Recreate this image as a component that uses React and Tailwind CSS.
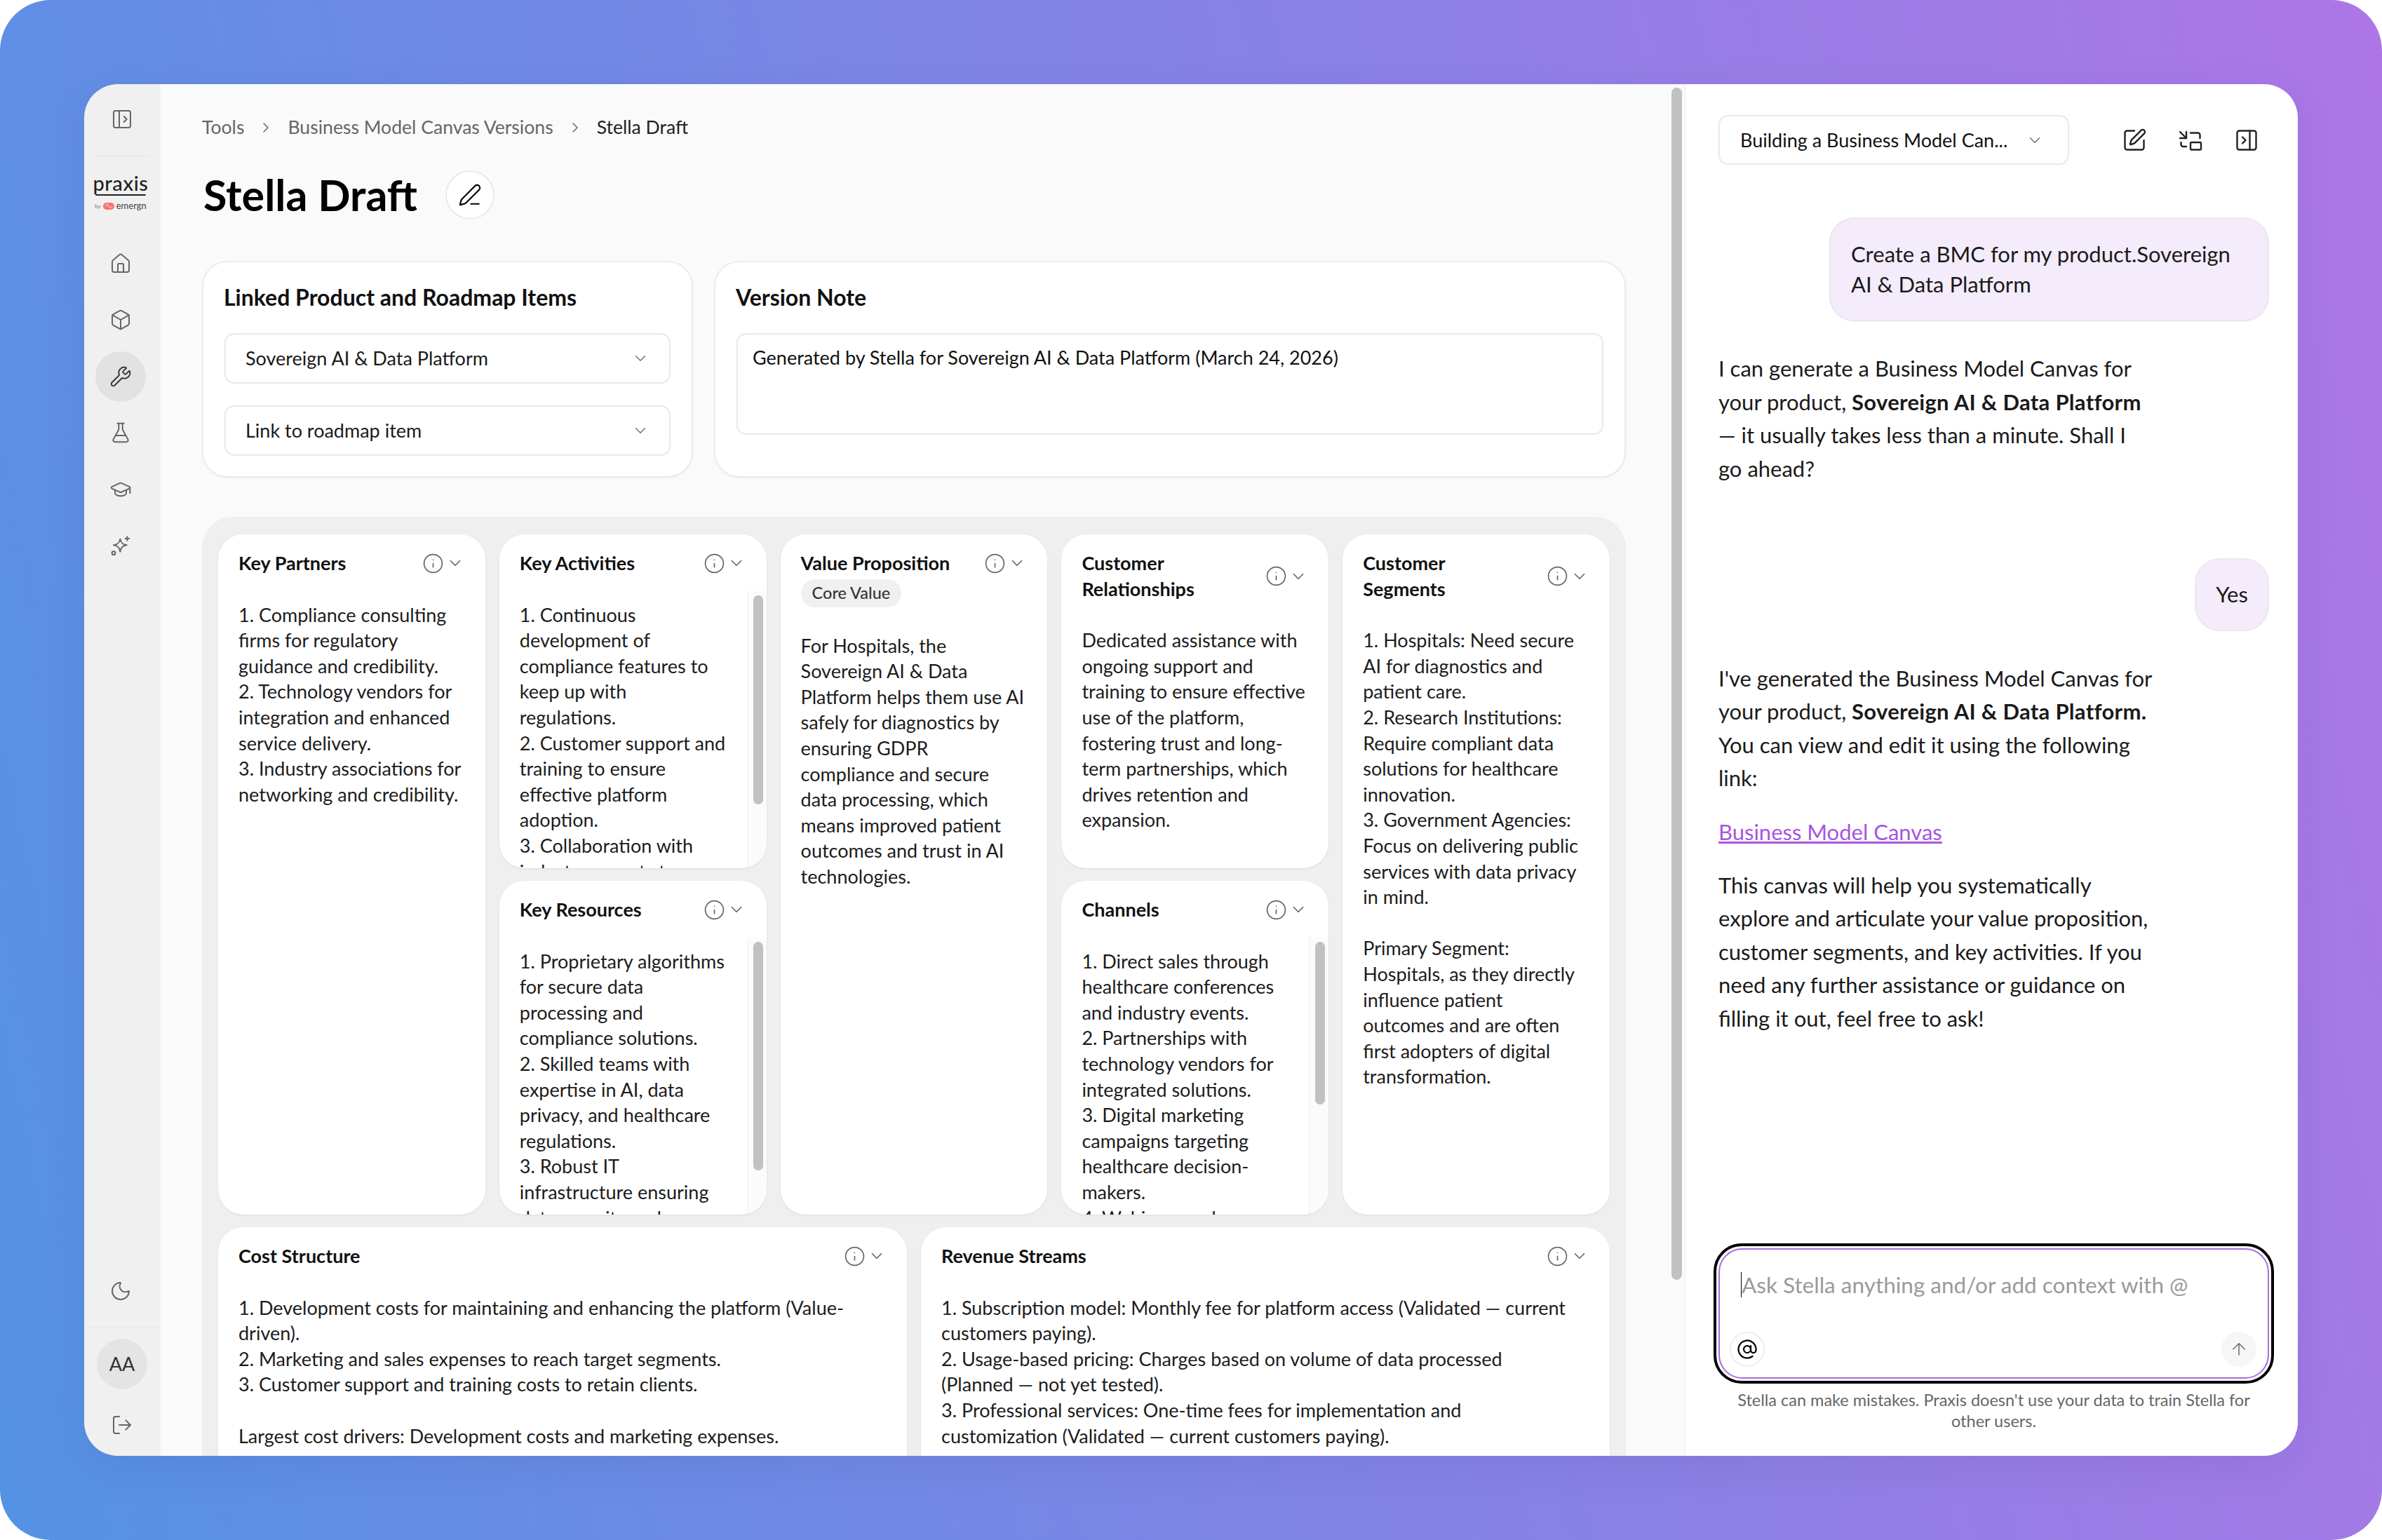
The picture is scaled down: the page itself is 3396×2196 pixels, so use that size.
import {
  ArrowUp,
  AtSign,
  Box,
  ChevronDown,
  ChevronRight,
  FlaskConical,
  GraduationCap,
  House,
  Info,
  LogOut,
  Moon,
  PanelLeftOpen,
  PanelRightClose,
  PenLine,
  PictureInPicture,
  SquarePen,
  Wrench,
} from 'lucide-react';

// Line breaks are kept as they are in the screenshot
const CARDS = {
  partners: [
    '1. Compliance consulting',
    'firms for regulatory',
    'guidance and credibility.',
    '2. Technology vendors for',
    'integration and enhanced',
    'service delivery.',
    '3. Industry associations for',
    'networking and credibility.',
  ],
  activities: [
    '1. Continuous',
    'development of',
    'compliance features to',
    'keep up with',
    'regulations.',
    '2. Customer support and',
    'training to ensure',
    'effective platform',
    'adoption.',
    '3. Collaboration with',
    'industry experts to',
  ],
  resources: [
    '1. Proprietary algorithms',
    'for secure data',
    'processing and',
    'compliance solutions.',
    '2. Skilled teams with',
    'expertise in AI, data',
    'privacy, and healthcare',
    'regulations.',
    '3. Robust IT',
    'infrastructure ensuring',
    'data security and',
  ],
  value: [
    'For Hospitals, the',
    'Sovereign AI & Data',
    'Platform helps them use AI',
    'safely for diagnostics by',
    'ensuring GDPR',
    'compliance and secure',
    'data processing, which',
    'means improved patient',
    'outcomes and trust in AI',
    'technologies.',
  ],
  relationships: [
    'Dedicated assistance with',
    'ongoing support and',
    'training to ensure effective',
    'use of the platform,',
    'fostering trust and long-',
    'term partnerships, which',
    'drives retention and',
    'expansion.',
  ],
  channels: [
    '1. Direct sales through',
    'healthcare conferences',
    'and industry events.',
    '2. Partnerships with',
    'technology vendors for',
    'integrated solutions.',
    '3. Digital marketing',
    'campaigns targeting',
    'healthcare decision-',
    'makers.',
    '4. Webinars and',
  ],
  segments: [
    '1. Hospitals: Need secure',
    'AI for diagnostics and',
    'patient care.',
    '2. Research Institutions:',
    'Require compliant data',
    'solutions for healthcare',
    'innovation.',
    '3. Government Agencies:',
    'Focus on delivering public',
    'services with data privacy',
    'in mind.',
    '',
    'Primary Segment:',
    'Hospitals, as they directly',
    'influence patient',
    'outcomes and are often',
    'first adopters of digital',
    'transformation.',
  ],
  cost: [
    '1. Development costs for maintaining and enhancing the platform (Value-',
    'driven).',
    '2. Marketing and sales expenses to reach target segments.',
    '3. Customer support and training costs to retain clients.',
    '',
    'Largest cost drivers: Development costs and marketing expenses.',
  ],
  revenue: [
    '1. Subscription model: Monthly fee for platform access (Validated — current',
    'customers paying).',
    '2. Usage-based pricing: Charges based on volume of data processed',
    '(Planned — not yet tested).',
    '3. Professional services: One-time fees for implementation and',
    'customization (Validated — current customers paying).',
  ],
};

function Lines({ lines }) {
  return lines.map((line, i) => (
    <div key={i} className="whitespace-nowrap">
      {line || '\u00a0'}
    </div>
  ));
}

function SparkIcon() {
  return (
    <svg width="32" height="32" viewBox="0 0 24 24" fill="none" stroke="currentColor" strokeWidth="1.5" strokeLinecap="round" strokeLinejoin="round">
      <path d="M11.5 5c.7 4 2.5 5.8 7 6.5-4.5.7-6.3 2.5-7 7-.7-4.5-2.5-6.3-7-7 4.5-.7 6.3-2.5 7-6.5z" />
      <path d="M19 2.5v4M17 4.5h4" />
      <circle cx="4.5" cy="20" r="1.8" />
    </svg>
  );
}

function NavItem({ children, active }) {
  return (
    <div className={`w-[72px] h-[72px] rounded-full flex items-center justify-center ${active ? 'bg-[#e2e2e2] text-[#3a3a3a]' : 'text-[#666]'}`}>
      {children}
    </div>
  );
}

function Sidebar() {
  return (
    <aside className="w-[109px] shrink-0 bg-[#f0f0f0] border-r border-[#f4f4f4] flex flex-col items-center pt-[34px] pb-[28px]">
      <PanelLeftOpen size={32} strokeWidth={1.5} className="text-[#666]" />
      <div className="w-[76px] h-px bg-[#e2e2e2] mt-[36px]" />

      {/* Logo */}
      <div className="h-[117px] w-full flex flex-col items-center pt-[24px] pr-[4px]">
        <span className="text-[29px] leading-[28px] font-medium text-[#222] tracking-[0.6px]">praxis</span>
        <div className="w-[72px] h-[2px] bg-[#222] rounded-full mt-[2px]" />
        <div className="flex items-center gap-[3px] mt-[8px]">
          <span className="text-[8px] leading-none text-[#777]">by</span>
          <svg width="16" height="12" viewBox="0 0 16 12" fill="#fb6f6f">
            <rect x="0" y="1" width="16" height="10" rx="5" />
            <path d="M3 6c2-3 4-3 5 0s3 3 5 0" fill="none" stroke="#fff" strokeWidth="1" />
          </svg>
          <span className="text-[13px] leading-none text-[#444]">emergn</span>
        </div>
      </div>

      <div className="flex flex-col items-center gap-[8.4px] pr-[4px]">
        <NavItem><House size={32} strokeWidth={1.5} /></NavItem>
        <NavItem><Box size={32} strokeWidth={1.5} /></NavItem>
        <NavItem active><Wrench size={32} strokeWidth={1.5} /></NavItem>
        <NavItem><FlaskConical size={32} strokeWidth={1.5} /></NavItem>
        <NavItem><GraduationCap size={32} strokeWidth={1.5} /></NavItem>
        <NavItem><SparkIcon /></NavItem>
      </div>

      <Moon size={32} strokeWidth={1.5} className="text-[#666] mt-auto mr-[4px]" />
      <div className="w-full h-px bg-[#e6e6e6] mt-[35px]" />
      <div className="w-[72px] h-[72px] rounded-full bg-[#e4e4e4] flex items-center justify-center text-[27px] text-[#333] mt-[16px]">
        AA
      </div>
      <LogOut size={32} strokeWidth={1.5} className="text-[#666] mt-[35px]" />
    </aside>
  );
}

function Select({ label }) {
  return (
    <div className="h-[72px] rounded-[14px] border-2 border-[#e9e9e9] bg-white flex items-center justify-between pl-[28px] pr-[28px] text-[27px] text-[#1a1a1a]">
      {label}
      <ChevronDown size={26} strokeWidth={1.5} className="text-[#777]" />
    </div>
  );
}

function CardHeader({ title }) {
  return (
    <div className="flex items-center justify-between">
      <div className="font-bold text-[#111]">
        <Lines lines={title} />
      </div>
      <div className="flex items-center gap-[3px] text-[#666] mr-[3px]">
        <Info size={31} strokeWidth={1.3} />
        <ChevronDown size={26} strokeWidth={1.6} />
      </div>
    </div>
  );
}

function Card({ title, lines, chip, thumb, className = '' }) {
  return (
    <section className={`relative overflow-hidden bg-white rounded-[36px] shadow-[0_1px_3px_rgba(0,0,0,0.08)] pl-[29px] pr-[27px] pt-[23px] text-[27px] leading-[36.6px] text-[#1c1c1c] ${className}`}>
      <CardHeader title={title} />
      {chip && (
        <div className="w-fit h-[40px] mt-[4px] px-[16px] rounded-full bg-[#f0f0f0] flex items-center text-[23.5px] font-medium text-[#333]">
          {chip}
        </div>
      )}
      <div className="mt-[37px]">
        <Lines lines={lines} />
      </div>
      {thumb && (
        <div className="absolute right-0 top-[81px] bottom-0 w-[28px] bg-[#fbfbfb] border-l border-[#eeeeee]">
          <div className={`w-[14px] ml-[8px] mt-[6px] rounded-full bg-[#c1c1c1] ${thumb}`} />
        </div>
      )}
    </section>
  );
}

function MainPanel() {
  return (
    <main className="flex-1 min-w-0 bg-[#fafafa] pt-[47px] pl-[59px] pr-[65px] overflow-hidden">
      <nav className="flex items-center h-[30px] text-[26.6px] text-[#666]">
        <span>Tools</span>
        <ChevronRight size={24} strokeWidth={1.5} className="mx-[19px]" />
        <span>Business Model Canvas Versions</span>
        <ChevronRight size={24} strokeWidth={1.5} className="mx-[19px]" />
        <span className="text-[#222]">Stella Draft</span>
      </nav>

      <div className="flex items-center mt-[46px]">
        <h1 className="text-[61px] leading-[70px] font-bold text-black ml-[2px]">Stella Draft</h1>
        <div className="w-[70px] h-[70px] ml-[40px] rounded-full border-2 border-[#eaeaea] bg-white flex items-center justify-center">
          <PenLine size={34} strokeWidth={1.5} className="text-black" />
        </div>
      </div>

      <div className="flex gap-[30px] mt-[59px]">
        <div className="w-[700px] h-[309px] bg-white rounded-[36px] border-2 border-[#ececec] shadow-[0_1px_2px_rgba(0,0,0,0.05)] px-[30px] pt-[32px]">
          <h2 className="text-[32px] leading-[36px] font-bold text-[#111] -ml-[1px]">Linked Product and Roadmap Items</h2>
          <div className="flex flex-col gap-[31px] mt-[33px]">
            <Select label="Sovereign AI & Data Platform" />
            <Select label="Link to roadmap item" />
          </div>
        </div>
        <div className="flex-1 h-[309px] bg-white rounded-[36px] border-2 border-[#ececec] shadow-[0_1px_2px_rgba(0,0,0,0.05)] px-[30px] pt-[32px]">
          <h2 className="text-[32px] leading-[36px] font-bold text-[#111] -ml-[1px]">Version Note</h2>
          <div className="h-[145px] mt-[33px] rounded-[14px] border-2 border-[#e9e9e9] pl-[21px] pt-[15px] text-[27px] leading-[36px] text-[#111]">
            Generated by Stella for Sovereign AI &amp; Data Platform (March 24, 2026)
          </div>
        </div>
      </div>

      <div className="mt-[56px] bg-[#efefef] rounded-t-[44px] px-[23px] pt-[25px] pb-[24px]">
        <div className="grid grid-cols-5 grid-rows-[476px_476px] gap-x-[20px] gap-y-[18px]">
          <Card title={['Key Partners']} lines={CARDS.partners} className="row-span-2" />
          <Card title={['Key Activities']} lines={CARDS.activities} thumb="h-[298px]" />
          <Card title={['Value Proposition']} lines={CARDS.value} chip="Core Value" className="row-span-2" />
          <Card title={['Customer', 'Relationships']} lines={CARDS.relationships} />
          <Card title={['Customer', 'Segments']} lines={CARDS.segments} className="row-span-2" />
          <Card title={['Key Resources']} lines={CARDS.resources} thumb="h-[326px]" className="col-start-2 row-start-2" />
          <Card title={['Channels']} lines={CARDS.channels} thumb="h-[232px]" className="col-start-4 row-start-2" />
        </div>
        <div className="grid grid-cols-2 gap-x-[20px] mt-[18px]">
          <Card title={['Cost Structure']} lines={CARDS.cost} className="h-[420px]" />
          <Card title={['Revenue Streams']} lines={CARDS.revenue} className="h-[420px]" />
        </div>
      </div>
    </main>
  );
}

function PageScrollbar() {
  return (
    <div className="w-[20px] shrink-0 bg-[#fafafa] border-r border-[#ececec] pt-[5px]">
      <div className="w-[15px] h-[1700px] rounded-full bg-[#c1c1c1]" />
    </div>
  );
}

function ChatPanel() {
  return (
    <aside className="w-[873px] shrink-0 bg-white flex flex-col pl-[47px] pr-[41px] pt-[44px] pb-[35px] text-[31px] leading-[47.6px] text-[#1a1a1a]">
      <div className="flex items-center">
        <div className="w-[500px] h-[71px] rounded-[14px] border-2 border-[#e9e9e9] flex items-center justify-between pl-[29px] pr-[34px] text-[27px] text-[#111]">
          Building a Business Model Can...
          <ChevronDown size={26} strokeWidth={1.5} className="text-[#777]" />
        </div>
        <div className="flex items-center gap-[44px] ml-[75px] text-[#222]">
          <SquarePen size={36} strokeWidth={1.6} />
          <PictureInPicture size={36} strokeWidth={1.6} />
          <PanelRightClose size={36} strokeWidth={1.6} />
        </div>
      </div>

      <div className="self-end w-[627px] mt-[75px] rounded-[36px] border-2 border-[#ece6f2] bg-[#f4ecfa] shadow-[0_1px_2px_rgba(0,0,0,0.06)] pl-[29px] pt-[29px] pb-[30px] leading-[42.6px]">
        <Lines lines={['Create a BMC for my product.Sovereign', 'AI & Data Platform']} />
      </div>

      <div className="mt-[44px]">
        <div className="whitespace-nowrap">I can generate a Business Model Canvas for</div>
        <div className="whitespace-nowrap">
          your product, <strong className="font-bold tracking-[0.3px]">Sovereign AI &amp; Data Platform</strong>
        </div>
        <div className="whitespace-nowrap">— it usually takes less than a minute. Shall I</div>
        <div className="whitespace-nowrap">go ahead?</div>
      </div>

      <div className="self-end w-[106px] h-[104px] mt-[103px] rounded-[36px] border-2 border-[#ece6f2] bg-[#f4ecfa] flex items-center justify-center">
        Yes
      </div>

      <div className="mt-[44px]">
        <div className="whitespace-nowrap">I've generated the Business Model Canvas for</div>
        <div className="whitespace-nowrap">
          your product, <strong className="font-bold tracking-[0.3px]">Sovereign AI &amp; Data Platform.</strong>
        </div>
        <div className="whitespace-nowrap">You can view and edit it using the following</div>
        <div className="whitespace-nowrap">link:</div>
      </div>

      <a className="mt-[29px] w-fit text-[#a855e0] underline">Business Model Canvas</a>

      <div className="mt-[28px]">
        <Lines
          lines={[
            'This canvas will help you systematically',
            'explore and articulate your value proposition,',
            'customer segments, and key activities. If you',
            'need any further assistance or guidance on',
            'filling it out, feel free to ask!',
          ]}
        />
      </div>

      {/* Prompt box */}
      <div className="mt-auto -ml-[7px] -mr-[7px] h-[200px] rounded-[40px] border-[4px] border-black p-[3px]">
        <div className="h-full rounded-[34px] border-2 border-[#a96be0] flex flex-col justify-between pl-[14px] pr-[16px] pb-[15px] pt-[32px]">
          <div className="pl-[16px] h-[36px] flex items-center">
            <span className="border-l border-black leading-[36px] text-[#9a9a9a] text-[31.5px] whitespace-nowrap">Ask Stella anything and/or add context with @</span>
          </div>
          <div className="flex items-center justify-between">
            <div className="w-[50px] h-[50px] rounded-full border-2 border-[#eeeeee] flex items-center justify-center text-black">
              <AtSign size={30} strokeWidth={1.8} />
            </div>
            <div className="w-[50px] h-[50px] rounded-full bg-[#f6f6f6] flex items-center justify-center text-[#777]">
              <ArrowUp size={28} strokeWidth={1.4} />
            </div>
          </div>
        </div>
      </div>
      <p className="mt-[8px] text-center text-[23.5px] leading-[30px] text-[#666] whitespace-nowrap">
        Stella can make mistakes. Praxis doesn't use your data to train Stella for
        <br />
        other users.
      </p>
    </aside>
  );
}

export default function App() {
  return (
    <div className="w-[3396px] h-[2196px] bg-white font-[family-name:Lato,sans-serif]">
      <div className="w-full h-full rounded-[72px] bg-[linear-gradient(78deg,#5592e4,#ad76e6)] p-[120px]">
        <div className="w-full h-full rounded-[48px] overflow-hidden flex shadow-[0_16px_60px_rgba(40,40,90,0.08)]">
          <Sidebar />
          <MainPanel />
          <PageScrollbar />
          <ChatPanel />
        </div>
      </div>
    </div>
  );
}
